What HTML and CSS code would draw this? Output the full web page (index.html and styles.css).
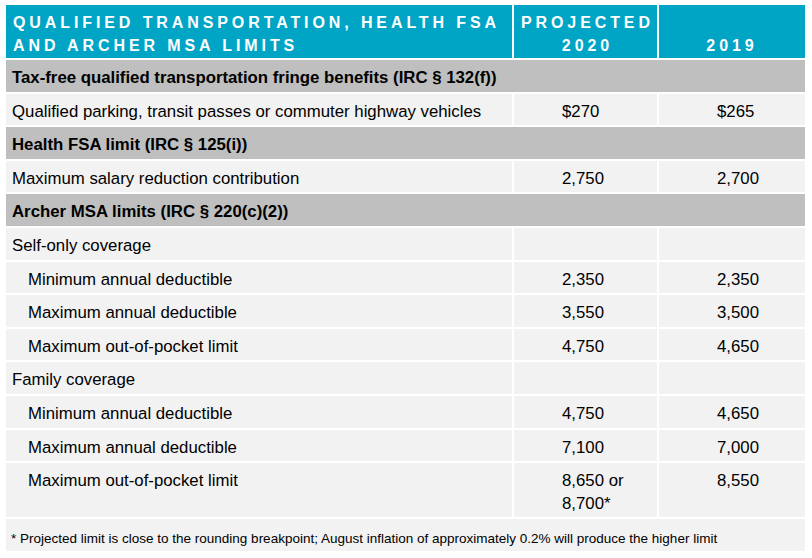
FILE: index.html
```html
<!DOCTYPE html>
<html>
<head>
<meta charset="utf-8">
<link rel="stylesheet" href="styles.css">
</head>
<body>
<div class="tbl">
  <div class="row head">
    <div class="c c1"><span class="ln">QUALIFIED TRANSPORTATION, HEALTH FSA</span><span class="ln">AND ARCHER MSA LIMITS</span></div>
    <div class="c c2"><span class="ln">PROJECTED</span><span class="ln">2020</span></div>
    <div class="c c3"><span class="ln">2019</span></div>
  </div>
  <div class="row sec"><div class="c">Tax-free qualified transportation fringe benefits (IRC § 132(f))</div></div>
  <div class="row item"><div class="c c1">Qualified parking, transit passes or commuter highway vehicles</div><div class="c c2">$270</div><div class="c c3">$265</div></div>
  <div class="row sec"><div class="c">Health FSA limit (IRC § 125(i))</div></div>
  <div class="row item"><div class="c c1">Maximum salary reduction contribution</div><div class="c c2">2,750</div><div class="c c3">2,700</div></div>
  <div class="row sec"><div class="c">Archer MSA limits (IRC § 220(c)(2))</div></div>
  <div class="row item"><div class="c c1">Self-only coverage</div><div class="c c2"></div><div class="c c3"></div></div>
  <div class="row item"><div class="c c1 ind">Minimum annual deductible</div><div class="c c2">2,350</div><div class="c c3">2,350</div></div>
  <div class="row item"><div class="c c1 ind">Maximum annual deductible</div><div class="c c2">3,550</div><div class="c c3">3,500</div></div>
  <div class="row item"><div class="c c1 ind">Maximum out-of-pocket limit</div><div class="c c2">4,750</div><div class="c c3">4,650</div></div>
  <div class="row item"><div class="c c1">Family coverage</div><div class="c c2"></div><div class="c c3"></div></div>
  <div class="row item"><div class="c c1 ind">Minimum annual deductible</div><div class="c c2">4,750</div><div class="c c3">4,650</div></div>
  <div class="row item"><div class="c c1 ind">Maximum annual deductible</div><div class="c c2">7,100</div><div class="c c3">7,000</div></div>
  <div class="row item"><div class="c c1 ind">Maximum out-of-pocket limit</div><div class="c c2">8,650 or 8,700*</div><div class="c c3">8,550</div></div>
  <div class="row note"><div class="c">* Projected limit is close to the rounding breakpoint; August inflation of approximately 0.2% will produce the higher limit</div></div>
</div>
</body>
</html>
```
FILE: styles.css
```css
html, body {
  margin: 0;
  background: #ffffff;
}
body {
  padding: 5px 6px;
  font-family: "Liberation Sans", Arial, sans-serif;
  color: #000;
}
.tbl {
  width: 799px;
  display: flex;
  flex-direction: column;
  gap: 2px;
}
.row {
  display: grid;
  grid-template-columns: 506px 143px 146px;
  column-gap: 2px;
}
.head .c {
  background: #00a5c6;
  color: #fff;
  font-weight: bold;
  font-size: 16px;
  letter-spacing: 3.9px;
  line-height: 23px;
  height: 53px;
  box-sizing: border-box;
  padding: 6px 0 1px 0;
  display: flex;
  flex-direction: column;
  justify-content: flex-end;
}
.head .c1 {
  padding-left: 7px;
}
.head .c2, .head .c3 {
  text-align: center;
  padding-left: 3.9px;
}
.head .c3 {
  padding-right: 4px;
}
.ln {
  display: block;
}
.sec {
  display: block;
  background: #bfbfbf;
}
.sec .c {
  font-weight: bold;
  font-size: 16.8px;
  line-height: 22.6px;
  padding: 7px 0 2px 6px;
}
.item .c {
  background: #f2f2f2;
  font-size: 16.8px;
  line-height: 22.6px;
  padding: 7px 0 2px 0;
  min-height: 22.6px;
}
.item .c1 {
  padding-left: 6px;
}
.item .c1.ind {
  padding-left: 22px;
}
.item .c2 {
  padding-left: 48px;
  padding-right: 24px;
}
.item .c3 {
  padding-left: 58px;
}
.note {
  display: block;
  background: #f2f2f2;
}
.note .c {
  font-size: 13.5px;
  line-height: 16px;
  padding: 12px 0 4px 5px;
}
```
